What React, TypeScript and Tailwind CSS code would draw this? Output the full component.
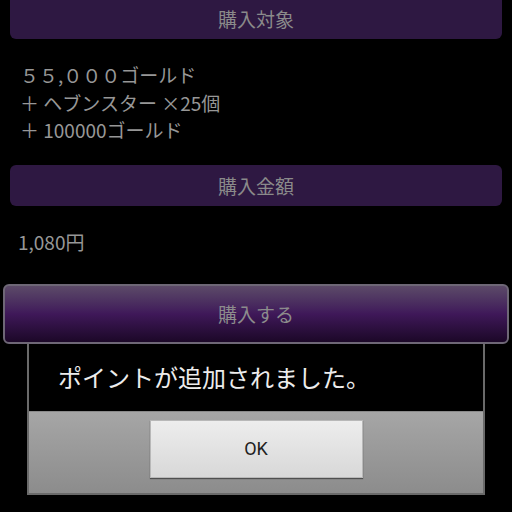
import React from 'react';

const jp = { fontFamily: '"Noto Sans CJK JP", "Noto Sans", sans-serif' };

const SectionBar = ({ label, className = '' }: { label: string; className?: string }) => (
  <div className={`mx-[10px] h-[41px] bg-[#2e1842] flex items-center justify-center ${className}`}>
    <span className="text-[19px] leading-none text-[#8a8a8a]">{label}</span>
  </div>
);

export default function App() {
  const items = ['５５,０００ゴールド', '＋ ヘブンスター ×25個', '＋ 100000ゴールド'];

  return (
    <div className="w-[512px] h-[512px] bg-black overflow-hidden flex flex-col" style={jp}>
      <SectionBar label="購入対象" className="-mt-[2px] rounded-b-[6px]" />

      <div className="mt-[22px] px-[20px] flex flex-col">
        {items.map((t) => (
          <p key={t} className="text-[19px] leading-[27.5px] text-[#979797]">{t}</p>
        ))}
      </div>

      <SectionBar label="購入金額" className="mt-[21px] rounded-[6px]" />

      <p className="mt-[22px] px-[18px] text-[19px] leading-[28px] text-[#979797]">1,080円</p>

      {/* buy button */}
      <div className="relative z-10 mt-[28px] mx-[3px] h-[60px] rounded-[6px] border-2 border-[#6e6776] bg-gradient-to-b from-[#5c4a68] via-[#3f1859] to-[#1c0828] flex items-center justify-center">
        <span className="text-[19px] leading-none text-[#8c8c8c]">購入する</span>
      </div>

      {/* alert dialog */}
      <div className="-mt-[2px] mx-[27px] h-[153px] border-x-2 border-b-2 border-[#6a6a6a] flex flex-col">
        <div className="h-[69px] bg-black flex items-center pl-[29px] pt-[2px]">
          <span className="text-[24px] leading-none text-[#ececec]">ポイントが追加されました。</span>
        </div>
        <div className="flex-1 border-t border-[#8a8a8a] bg-gradient-to-b from-[#a6a6a6] to-[#8c8c8c] flex justify-center pt-[8px]">
          <button className="w-[213px] h-[58px] bg-gradient-to-b from-[#ededed] to-[#d8d8d8] border border-[#b8b8b8] shadow-[0_1px_1px_rgba(0,0,0,0.45)] flex items-center justify-center">
            <span className="text-[18px] text-[#222]" style={{ fontFamily: 'Roboto, "Noto Sans", sans-serif' }}>OK</span>
          </button>
        </div>
      </div>
    </div>
  );
}
